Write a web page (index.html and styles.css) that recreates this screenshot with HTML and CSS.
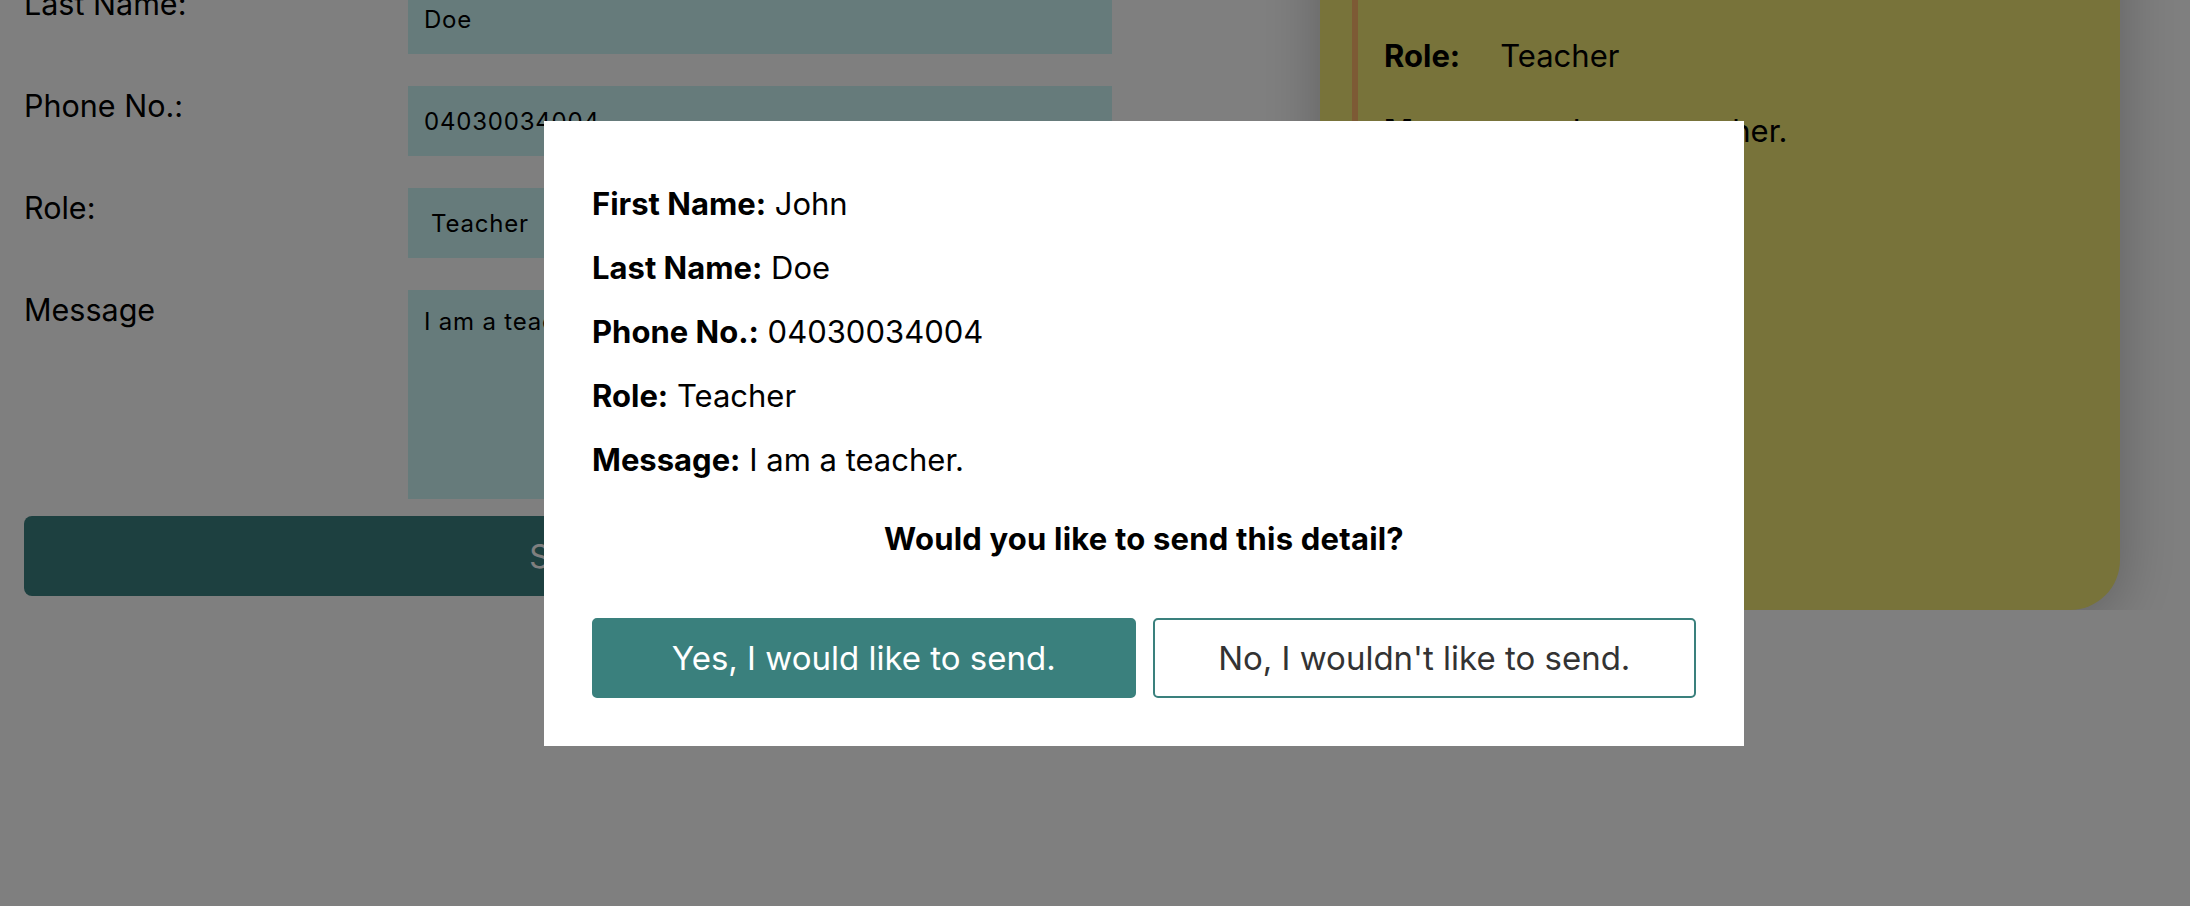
FILE: index.html
```html
<!DOCTYPE html>
<html lang="en">
<head>
<meta charset="utf-8">
<title>Contact form</title>
<link rel="stylesheet" href="styles.css">
</head>
<body>
<div class="page">
  <form class="form">
    <label class="label">First Name:</label>
    <input class="field" type="text" value="John">
    <label class="label">Last Name:</label>
    <input class="field" type="text" value="Doe">
    <label class="label">Phone No.:</label>
    <input class="field" type="text" value="04030034004">
    <label class="label">Role:</label>
    <select class="field select"><option>Teacher</option></select>
    <label class="label">Message</label>
    <textarea class="field area">I am a teacher.</textarea>
    <button class="submit" type="button">Send</button>
  </form>
  <aside class="card">
    <div class="card-inner">
      <div class="card-row"><b>First Name:</b><span>John</span></div>
      <div class="card-row"><b>Last Name:</b><span>Doe</span></div>
      <div class="card-row"><b>Phone No.:</b><span>04030034004</span></div>
      <div class="card-row"><b>Role:</b><span>Teacher</span></div>
      <div class="card-row"><b>Message:</b><span>I am a teacher.</span></div>
    </div>
  </aside>
</div>

<div class="overlay">
  <div class="modal">
    <div class="details">
      <p class="detail"><b>First Name:</b> John</p>
      <p class="detail"><b>Last Name:</b> Doe</p>
      <p class="detail"><b>Phone No.:</b> 04030034004</p>
      <p class="detail"><b>Role:</b> Teacher</p>
      <p class="detail"><b>Message:</b> I am a teacher.</p>
    </div>
    <p class="question">Would you like to send this detail?</p>
    <div class="actions">
      <button class="btn btn-yes" type="button">Yes, I would like to send.</button>
      <button class="btn btn-no" type="button">No, I wouldn't like to send.</button>
    </div>
  </div>
</div>
</body>
</html>
```

FILE: styles.css
```css
* { box-sizing: border-box; }

html, body {
  margin: 0;
  padding: 0;
  background: #ffffff;
  font-family: Inter, "Noto Sans", "Liberation Sans", sans-serif;
  color: #000;
  overflow: hidden;
}

.page {
  display: flex;
  align-items: flex-start;
  gap: 208px;
  padding-left: 24px;
  margin-top: -240px;
}

.form {
  width: 1088px;
  padding-top: 122px;
  display: grid;
  grid-template-columns: 384px 704px;
  row-gap: 32px;
}

.label {
  font-size: 30.5px;
  line-height: 36px;
  padding-top: 2px;
}

.field {
  height: 70px;
  border: none;
  background: #ccf6f6;
  font-family: inherit;
  font-size: 24px;
  letter-spacing: 0.8px;
  color: #000;
  padding: 0 16px;
  margin: 0;
  outline: none;
}

.select {
  appearance: none;
  -webkit-appearance: none;
  padding-left: 23px;
  border-radius: 0;
}

.area {
  height: 209px;
  resize: none;
  padding: 18px 16px;
  line-height: 28px;
}

.submit {
  grid-column: 1 / 3;
  margin-top: -15px;
  height: 80px;
  border: none;
  border-radius: 8px;
  background: #3a8080;
  color: #fff;
  font-family: inherit;
  font-size: 32px;
}

.card {
  width: 800px;
  height: 850px;
  background: #f0e674;
  border-radius: 50px;
  box-shadow: 0 10px 60px rgba(0, 0, 0, 0.25);
  padding: 53px 32px 53px 32px;
  display: flex;
}

.card-inner {
  flex: 1;
  border-left: 6px solid #fab46a;
  padding-left: 26px;
  display: flex;
  flex-direction: column;
  gap: 39px;
}

.card-row {
  display: flex;
  gap: 40px;
  font-size: 31px;
  line-height: 36px;
}

.overlay {
  position: fixed;
  inset: 0;
  background: rgba(0, 0, 0, 0.5);
  display: flex;
  align-items: flex-start;
  padding: 121px 0 0 544px;
}

.modal {
  width: 1200px;
  background: #fff;
  padding: 65px 48px 48px 48px;
}

.details {
  display: flex;
  flex-direction: column;
  gap: 28px;
}

.detail {
  margin: 0;
  font-size: 31px;
  line-height: 36px;
}

.question {
  margin: 43px 0 0 0;
  text-align: center;
  font-weight: 700;
  font-size: 31px;
  letter-spacing: 0.2px;
  line-height: 36px;
}

.actions {
  margin-top: 61px;
  display: flex;
  gap: 17px;
}

.btn {
  flex: 1;
  height: 80px;
  border-radius: 5px;
  font-family: inherit;
  font-size: 33px;
  border: 2px solid #3a807d;
}

.btn-yes {
  background: #3a807d;
  color: #fff;
}

.btn-no {
  background: #fff;
  color: #333;
}
```
